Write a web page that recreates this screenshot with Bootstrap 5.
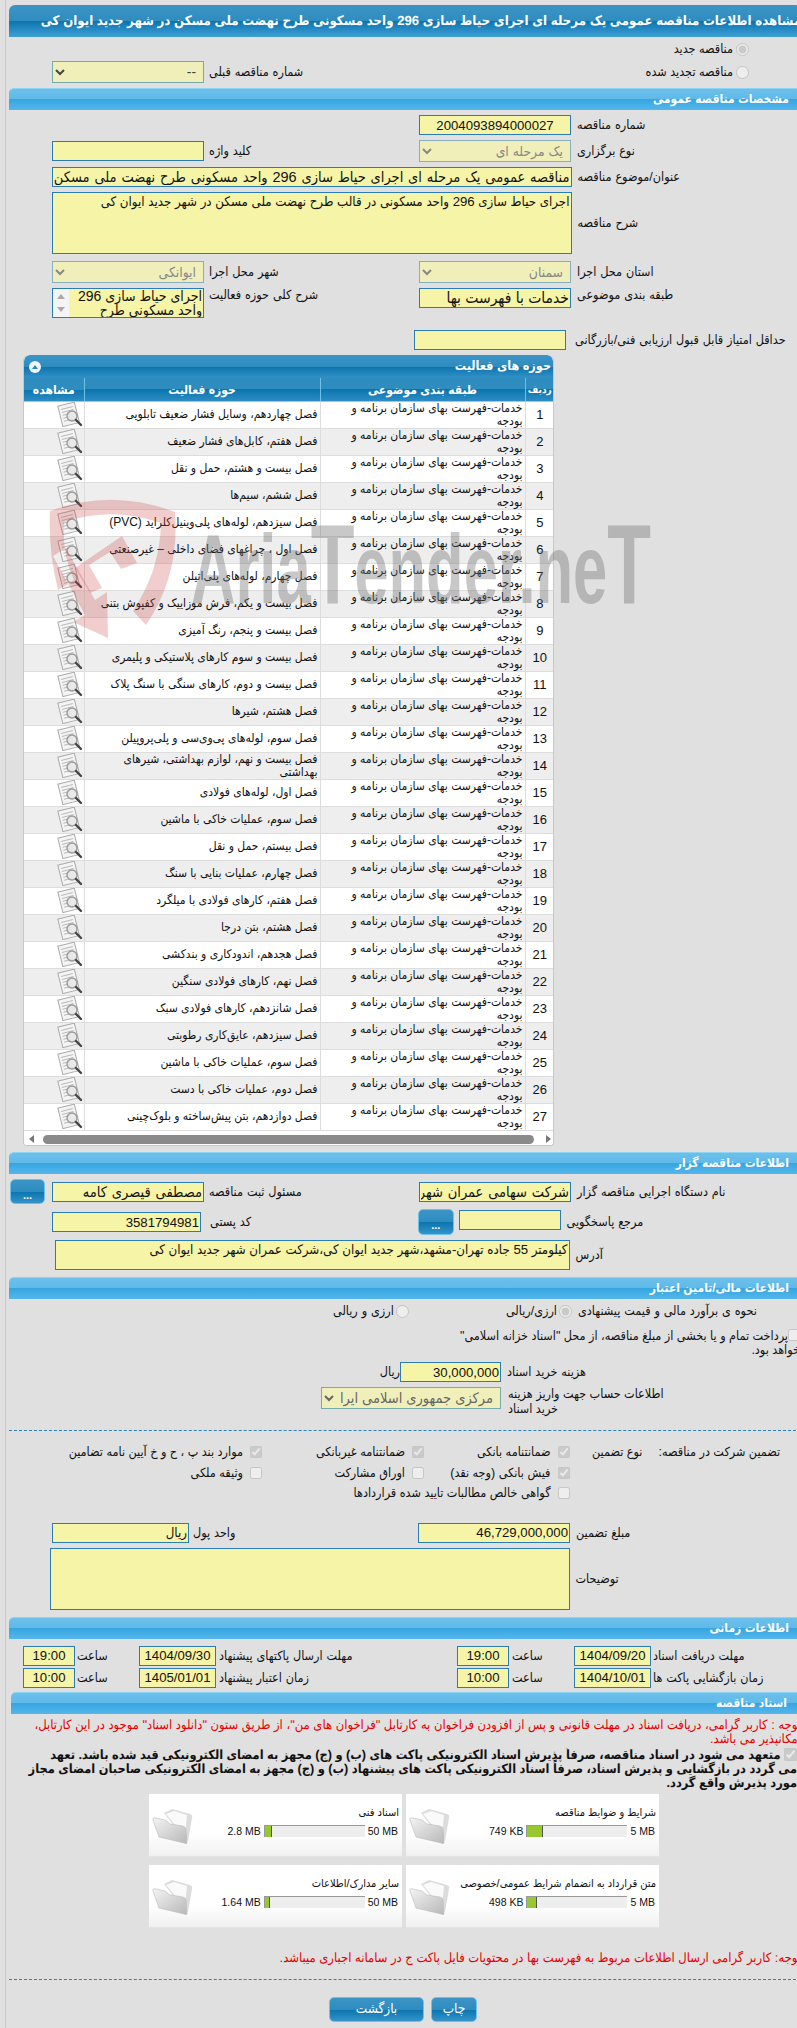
<!DOCTYPE html>
<html lang="fa">
<head>
<meta charset="utf-8">
<title>مشاهده اطلاعات مناقصه</title>
<link href="https://cdn.jsdelivr.net/npm/bootstrap@5.3.0/dist/css/bootstrap.min.css" rel="stylesheet">
<style>
html,body{margin:0;background:#e0e0e0;overflow:hidden}
body{width:797px;height:2028px;font-family:"Liberation Sans","DejaVu Sans Condensed","DejaVu Sans",sans-serif;font-size:12px;line-height:14px;color:#111}
.pagebox{position:relative;margin-left:5px;border-left:1px solid #c9c9c9;padding-left:3px;width:796px;height:2028px;overflow:hidden}
.hdr{height:32px;margin-top:5px;border-radius:6px 6px 0 0;background:linear-gradient(#3c94c6 0,#2f8cbf 50%,#0b74ad 50%,#3f9fd6 100%);color:#fff;font-weight:700;font-size:13.15px;text-rendering:geometricPrecision;line-height:32px;white-space:nowrap;text-align:right;overflow:hidden}
.sec{height:22px;border-radius:5px 5px 0 0;background:linear-gradient(#6cc0eb 0,#5fb9e9 50%,#36a6e1 50%,#55b6ea 100%);border-top:1px solid #8fd3f3;color:#fff;font-weight:700;font-size:12px;line-height:21px;padding-right:12px;text-align:right}
.sec5{margin-left:2px;padding-right:14px}
.m2{margin-top:2px}.m4{margin-top:4px}.m5{margin-top:5px}.m6{margin-top:6px}.m7{margin-top:7px}.m8{margin-top:8px}.m12{margin-top:12px}.m19{margin-top:19px}
.pl43{padding-left:43px}
.h20{height:20px}.h22{height:22px}.h25{height:25px}.h26{height:26px}.h30{height:30px}
.fld{width:152px;flex:none}
.lbl1{width:215px;flex:none;padding-left:5px}
.lbl2{padding-left:6px;flex:none}
.tl{text-align:left;font-size:12.5px;white-space:nowrap;word-spacing:.4px}
.fc.form-control,.fsel{display:block;height:20px;min-height:0;padding:0 1px;border:1px solid #2b7cb3;border-radius:0;background:#f6f4a6;color:#111;font-family:inherit;font-size:13.2px;line-height:18px;box-shadow:none;text-align:right}
.fc.form-control.big{font-size:14.5px;word-spacing:.8px}
.fc.form-control.big2{font-size:15.5px}
.fsel{height:22px;border-color:#88aebf;background:#f0efb9;color:#888;width:100%;padding:0 3px;font-size:13.8px}
.fsel.live{color:#444;border-color:#7aa}
.fsel.wide{font-size:14.5px;color:#666}
textarea.fc.form-control{resize:none;overflow:hidden;line-height:16px;height:62px;padding:1px}
.rdo{width:13px;height:13px;margin:0;flex:none}
.radio-line{padding-right:52px;height:14px;justify-content:flex-end;gap:3px;align-items:center}
.radio-line span,.rside span{font-size:12.5px}
.rside{padding-right:52px;gap:3px;margin-left:auto;align-items:center}
.lst{height:30px;border:1px solid #2b7cb3;background:#f6f4a6;overflow:hidden}
.lsb{width:16px;flex:none;background:#f4f4f4;display:flex;flex-direction:column;justify-content:space-between;align-items:center;padding:5px 0}
.lsb i{display:block;border:4px solid transparent}
.lsb i.u{border-bottom:5px solid #aaa;border-top:0}
.lsb i.d{border-top:5px solid #aaa;border-bottom:0}
.ltx{flex:1;font-size:14px;line-height:14px;text-align:right;overflow:hidden;padding-right:1px}
.panel{margin-left:14px;width:531px;background:#fff;border:1px solid #a9cfe9;border-top:0;border-radius:6px 6px 4px 4px;height:791px;overflow:hidden}
.pbar{height:23px;background:linear-gradient(#3c94c6 0,#2f8cbf 50%,#0b74ad 50%,#3390c8 100%);color:#fff;font-weight:700;font-size:12.5px;line-height:23px;padding:0 2px 0 5px;border-radius:6px 6px 0 0}
.tog{width:12px;height:12px;border-radius:50%;background:#eef6fb;display:flex;align-items:center;justify-content:center}
.tog::before{content:"";border:3.5px solid transparent;border-bottom:4px solid #2f86b8;border-top:0}
.grid.table{table-layout:fixed;width:530px;margin:0;border-collapse:collapse;background:#fff}
.grid.table th{height:23px;padding:0;background:linear-gradient(#2f8cbf 0,#2f8cbf 50%,#0b74ad 50%,#2d8cc4 100%);color:#fff;font-weight:700;font-size:12px;text-align:center;border:0;border-left:1px solid #6ec0e8;border-bottom:1px solid #86d2f4;line-height:22px;box-shadow:none;white-space:nowrap}
.grid.table th:first-child{border-left:0}
.grid.table th.thn{font-size:10px}
.grid.table td{height:27px;padding:0 2px;border:0;border-left:1px solid #ddd;border-bottom:1px solid #ddd;line-height:13px;font-size:12px;color:#111;text-align:right;background:#fff;box-shadow:none;overflow:hidden;vertical-align:middle}
.grid.table td:first-child{border-left:0;padding:0}
.grid.table td.num{text-align:center;font-size:13px}
.grid.table tbody tr:nth-child(even) td{background:#eee}
.docic{display:block;width:26px;height:25px;margin:0 0 0 33px}
.cw1{width:60px}.cw2{width:236px}.cw3{width:205px}.cw4{width:29px}
.sbar{height:16px;padding:4px 2px 0 5px;gap:5px;align-items:flex-start;background:#fff}
.sbar i{display:block;border:4.5px solid transparent}
.sbar i.l{border-right:5px solid #777;border-left:0}
.sbar i.r{border-left:5px solid #777;border-right:0}
.sbar b{display:block;flex:1;height:9px;border-radius:5px;background:#8a8a8a;margin:0 7px 0 4px}
.bluebtn.btn{padding:0;border:1px solid #6ec1e8;border-radius:5px;background:linear-gradient(#3c94c6 0,#2f8cbf 50%,#0b74ad 50%,#3593ca 100%);color:#fff;font-family:inherit;font-size:13.5px;line-height:20px}
.bluebtn.dots{width:35px;height:25px;font-weight:700;font-size:11px;line-height:30px}
.bluebtn.dots2{width:36.5px;height:26px}
.pl1{padding-left:1px}
.gap7{margin-right:7px}
.w149{width:149px;flex:none}
.lblz{width:216.5px;flex:none;padding-left:9px}
.w101{width:101.5px;flex:none;margin-left:5px;margin-top:-4px}
.addr{padding-left:46px;height:30px}
.addr textarea.fc.form-control{height:30px;width:514.5px}
.addrl{padding-top:8px}
.cen{align-items:center}
.opts{padding-left:324px;height:14px;align-items:center}
.opt{gap:2px;align-items:center;flex:none}
.opt1{width:169px;justify-content:flex-end;margin-left:-6px}
.opt2{width:76px}
.treasury{margin-left:421px;margin-top:11px;width:370px;height:28px;line-height:14px;white-space:nowrap;font-size:12.5px;text-align:right}
.treasury input{width:12px;height:12px;margin:0;vertical-align:-1px}
.cost{padding-left:371px;height:20px;align-items:center}
.cost .unit{width:20px;flex:none;font-size:12.5px}
.fld2{width:101px;flex:none}
.fld3{width:180px;height:22px;flex:none}
.acct{padding-left:312px;height:27px;margin-top:5px;align-items:flex-start}
.acct .t{width:170px;padding-left:7px;text-align:left;line-height:15px;font-size:12.5px}
.dash{height:0;border-top:1px dashed #2b83bb}
.dash1{margin-top:16px}
.dash2{margin-top:14px}
.gr{display:flex;height:20.5px;align-items:center}
.c3{width:253px}.c2{width:162px}.c1{width:145.5px}
.gc{display:flex;justify-content:flex-end;align-items:center;gap:7px;font-size:12.5px;white-space:nowrap;flex:none}
.gw{width:307.5px}
.cb{width:12px;height:12px;margin:0;flex:none}
.guar{margin-top:11px}
.gl1{width:53px;margin-left:20px;font-size:12.5px;white-space:nowrap}
.gl2{margin-left:16px;font-size:12.5px;white-space:nowrap}
.w137{width:137px;flex:none}
.lblp{width:229px;flex:none;padding-left:4px}
.ta2{padding-left:41px;height:62px}
.ta2 textarea.fc.form-control{width:519.5px;height:62px}
.fw519{width:519.5px;flex:none}
.pl14{padding-left:14px}
.fc.form-control.tm,.fc.form-control.dt{text-align:center;padding:0;flex:none}
.fc.form-control.tm{width:52px}
.fc.form-control.dt{width:77px}
.ls{width:64px;flex:none;padding-left:2px}
.ld{width:241px;flex:none;padding-left:3px}
.ls2{width:65px;flex:none;padding-left:3px}
.ld2{flex:none;padding-left:2px}
.redtxt{color:#e60000;font-size:12.9px;text-rendering:geometricPrecision;line-height:14px;white-space:nowrap;text-align:right;overflow:hidden}
.noticeb{font-weight:700;font-size:12.7px;text-rendering:geometricPrecision;line-height:14px;white-space:nowrap;text-align:right;margin-top:2px;height:42px;padding-right:4px;color:#111;overflow:hidden}
.noticeb input{width:13px;height:13px;margin:0;vertical-align:-2px}
.files{margin-left:140px;width:510px;margin-top:4px;display:grid;grid-template-columns:253px 253px;column-gap:4px;row-gap:8px}
.fbox{height:63px;display:flex;background:linear-gradient(#fff 0,#fff 65%,#f0f0f0 100%);border-bottom:1px solid #e4e4e4}
.folder{width:41px;height:36px;flex:none;margin:14px 0 0 3px}
.fin{flex:1;min-width:0;padding:0 4px 0 5px}
.ftitle{text-align:right;font-size:11px;line-height:14px;margin-top:11px;white-space:nowrap;height:14px;margin-right:-1px}
.fmeter{margin-top:6px;height:12px;display:flex;align-items:center;font-size:10.5px;justify-content:flex-end;gap:3px;white-space:nowrap}
.mbar{display:block;width:101px;height:12px;background:#eee;border-top:1px solid #999;border-left:1px solid #999;flex:none}
.mbar span{display:block;height:11px;background:#97c92f;border-right:1px solid #555}
.mv1{width:16%}.mv2{width:10%}.mv3{width:5%}.mv4{width:7.5%}
.note2{margin-top:23px}
.btns{margin-top:17px;padding-left:320px;gap:7px}
.bluebtn.bk{width:95px;height:25px}.bluebtn.pr{width:46px;height:25px}
.wm{position:absolute;left:0;top:0;pointer-events:none;width:796px;height:800px}
.minrow{padding-left:405px}
.minl{padding-left:9px}
</style>
</head>
<body>
<div class="pagebox">

<div class="hdr" dir="rtl">مشاهده اطلاعات مناقصه عمومی یک مرحله ای اجرای حیاط سازی 296 واحد مسکونی طرح نهضت ملی مسکن در شهر جدید ایوان کی</div>

<div class="d-flex radio-line m5"><span dir="rtl">مناقصه جدید</span><input class="rdo" type="radio" name="a" checked disabled></div>

<div class="d-flex pl43 m5 h22 cen">
  <div class="fld"><select class="fsel live" dir="rtl" disabled><option>--</option></select></div>
  <div class="lbl1 tl" dir="rtl">شماره مناقصه قبلی</div>
  <div class="d-flex rside"><span dir="rtl">مناقصه تجدید شده</span><input class="rdo" type="radio" name="a" disabled></div>
</div>

<div class="sec m5" dir="rtl">مشخصات مناقصه عمومی</div>

<div class="d-flex pl43 m5 h20 cen">
  <div class="fld"></div><div class="lbl1"></div>
  <div class="fld"><input class="form-control fc text-center" value="2004093894000027" readonly></div>
  <div class="lbl2 tl" dir="rtl">شماره مناقصه</div>
</div>
<div class="d-flex pl43 m5 h22 cen">
  <div class="fld"><input class="form-control fc" readonly></div>
  <div class="lbl1 tl" dir="rtl">کلید واژه</div>
  <div class="fld"><select class="fsel" dir="rtl" disabled><option>یک مرحله ای</option></select></div>
  <div class="lbl2 tl" dir="rtl">نوع برگزاری</div>
</div>
<div class="d-flex pl43 m5 h20 cen">
  <div class="fw519"><input class="form-control fc big" dir="rtl" value="مناقصه عمومی یک مرحله ای اجرای حیاط سازی 296 واحد مسکونی طرح نهضت ملی مسکن در شهر جدید ایوان کی" readonly></div>
  <div class="lbl2 tl" dir="rtl">عنوان/موضوع مناقصه</div>
</div>
<div class="d-flex pl43 m5 cen">
  <div class="fw519"><textarea class="form-control fc" dir="rtl" readonly>اجرای حیاط سازی 296 واحد مسکونی در قالب طرح نهضت ملی مسکن در شهر جدید ایوان کی</textarea></div>
  <div class="lbl2 tl" dir="rtl">شرح مناقصه</div>
</div>
<div class="d-flex pl43 m7 h22 cen">
  <div class="fld"><select class="fsel" dir="rtl" disabled><option>ایوانکی</option></select></div>
  <div class="lbl1 tl" dir="rtl">شهر محل اجرا</div>
  <div class="fld"><select class="fsel" dir="rtl" disabled><option>سمنان</option></select></div>
  <div class="lbl2 tl" dir="rtl">استان محل اجرا</div>
</div>
<div class="d-flex pl43 m5 h30">
  <div class="fld lst d-flex"><div class="lsb"><i class="u"></i><i class="d"></i></div><div class="ltx" dir="rtl">اجرای حیاط سازی 296 واحد مسکونی طرح نهضت</div></div>
  <div class="lbl1 tl" dir="rtl">شرح کلی حوزه فعالیت</div>
  <div class="fld"><input class="form-control fc big2" dir="rtl" value="خدمات با فهرست بها" readonly></div>
  <div class="lbl2 tl" dir="rtl">طبقه بندی موضوعی</div>
</div>
<div class="d-flex m12 h20 cen minrow">
  <div class="fld"><input class="form-control fc" readonly></div>
  <div class="lbl2 tl minl" dir="rtl">حداقل امتیاز قابل قبول ارزیابی فنی/بازرگانی</div>
</div>

<div class="panel m5">
  <div class="pbar d-flex justify-content-between align-items-center"><span class="tog"></span><span dir="rtl">حوزه های فعالیت</span></div>
  <table class="table grid">
    <colgroup><col class="cw1"><col class="cw2"><col class="cw3"><col class="cw4"></colgroup>
    <thead><tr><th dir="rtl">مشاهده</th><th dir="rtl">حوزه فعالیت</th><th dir="rtl">طبقه بندی موضوعی</th><th dir="rtl" class="thn">ردیف</th></tr></thead>
    <tbody>
    <tr><td><svg class="docic"><use href="#doc"/></svg></td><td dir="rtl">فصل چهاردهم، وسایل فشار ضعیف تابلویی</td><td dir="rtl">خدمات-فهرست بهای سازمان برنامه و بودجه</td><td class="num">1</td></tr>
    <tr><td><svg class="docic"><use href="#doc"/></svg></td><td dir="rtl">فصل هفتم، کابل‌های فشار ضعیف</td><td dir="rtl">خدمات-فهرست بهای سازمان برنامه و بودجه</td><td class="num">2</td></tr>
    <tr><td><svg class="docic"><use href="#doc"/></svg></td><td dir="rtl">فصل بیست و هشتم، حمل و نقل</td><td dir="rtl">خدمات-فهرست بهای سازمان برنامه و بودجه</td><td class="num">3</td></tr>
    <tr><td><svg class="docic"><use href="#doc"/></svg></td><td dir="rtl">فصل ششم، سیم‌ها</td><td dir="rtl">خدمات-فهرست بهای سازمان برنامه و بودجه</td><td class="num">4</td></tr>
    <tr><td><svg class="docic"><use href="#doc"/></svg></td><td dir="rtl">فصل سیزدهم، لوله‌های پلی‌وینیل‌کلراید (PVC)</td><td dir="rtl">خدمات-فهرست بهای سازمان برنامه و بودجه</td><td class="num">5</td></tr>
    <tr><td><svg class="docic"><use href="#doc"/></svg></td><td dir="rtl">فصل اول ، چراغهای فضای داخلی – غیرصنعتی</td><td dir="rtl">خدمات-فهرست بهای سازمان برنامه و بودجه</td><td class="num">6</td></tr>
    <tr><td><svg class="docic"><use href="#doc"/></svg></td><td dir="rtl">فصل چهارم، لوله‌های پلی‌اتیلن</td><td dir="rtl">خدمات-فهرست بهای سازمان برنامه و بودجه</td><td class="num">7</td></tr>
    <tr><td><svg class="docic"><use href="#doc"/></svg></td><td dir="rtl">فصل بیست و یکم، فرش موزاییک و کفپوش بتنی</td><td dir="rtl">خدمات-فهرست بهای سازمان برنامه و بودجه</td><td class="num">8</td></tr>
    <tr><td><svg class="docic"><use href="#doc"/></svg></td><td dir="rtl">فصل بیست و پنجم، رنگ آمیزی</td><td dir="rtl">خدمات-فهرست بهای سازمان برنامه و بودجه</td><td class="num">9</td></tr>
    <tr><td><svg class="docic"><use href="#doc"/></svg></td><td dir="rtl">فصل بیست و سوم کارهای پلاستیکی و پلیمری</td><td dir="rtl">خدمات-فهرست بهای سازمان برنامه و بودجه</td><td class="num">10</td></tr>
    <tr><td><svg class="docic"><use href="#doc"/></svg></td><td dir="rtl">فصل بیست و دوم، کارهای سنگی با سنگ پلاک</td><td dir="rtl">خدمات-فهرست بهای سازمان برنامه و بودجه</td><td class="num">11</td></tr>
    <tr><td><svg class="docic"><use href="#doc"/></svg></td><td dir="rtl">فصل هشتم، شیرها</td><td dir="rtl">خدمات-فهرست بهای سازمان برنامه و بودجه</td><td class="num">12</td></tr>
    <tr><td><svg class="docic"><use href="#doc"/></svg></td><td dir="rtl">فصل سوم، لوله‌های پی‌وی‌سی و پلی‌پروپیلن</td><td dir="rtl">خدمات-فهرست بهای سازمان برنامه و بودجه</td><td class="num">13</td></tr>
    <tr><td><svg class="docic"><use href="#doc"/></svg></td><td dir="rtl">فصل بیست و نهم، لوازم بهداشتی، شیرهای بهداشتی</td><td dir="rtl">خدمات-فهرست بهای سازمان برنامه و بودجه</td><td class="num">14</td></tr>
    <tr><td><svg class="docic"><use href="#doc"/></svg></td><td dir="rtl">فصل اول، لوله‌های فولادی</td><td dir="rtl">خدمات-فهرست بهای سازمان برنامه و بودجه</td><td class="num">15</td></tr>
    <tr><td><svg class="docic"><use href="#doc"/></svg></td><td dir="rtl">فصل سوم، عملیات خاکی با ماشین</td><td dir="rtl">خدمات-فهرست بهای سازمان برنامه و بودجه</td><td class="num">16</td></tr>
    <tr><td><svg class="docic"><use href="#doc"/></svg></td><td dir="rtl">فصل بیستم، حمل و نقل</td><td dir="rtl">خدمات-فهرست بهای سازمان برنامه و بودجه</td><td class="num">17</td></tr>
    <tr><td><svg class="docic"><use href="#doc"/></svg></td><td dir="rtl">فصل چهارم، عملیات بنایی با سنگ</td><td dir="rtl">خدمات-فهرست بهای سازمان برنامه و بودجه</td><td class="num">18</td></tr>
    <tr><td><svg class="docic"><use href="#doc"/></svg></td><td dir="rtl">فصل هفتم، کارهای فولادی با میلگرد</td><td dir="rtl">خدمات-فهرست بهای سازمان برنامه و بودجه</td><td class="num">19</td></tr>
    <tr><td><svg class="docic"><use href="#doc"/></svg></td><td dir="rtl">فصل هشتم، بتن درجا</td><td dir="rtl">خدمات-فهرست بهای سازمان برنامه و بودجه</td><td class="num">20</td></tr>
    <tr><td><svg class="docic"><use href="#doc"/></svg></td><td dir="rtl">فصل هجدهم، اندودکاری و بندکشی</td><td dir="rtl">خدمات-فهرست بهای سازمان برنامه و بودجه</td><td class="num">21</td></tr>
    <tr><td><svg class="docic"><use href="#doc"/></svg></td><td dir="rtl">فصل نهم، کارهای فولادی سنگین</td><td dir="rtl">خدمات-فهرست بهای سازمان برنامه و بودجه</td><td class="num">22</td></tr>
    <tr><td><svg class="docic"><use href="#doc"/></svg></td><td dir="rtl">فصل شانزدهم، کارهای فولادی سبک</td><td dir="rtl">خدمات-فهرست بهای سازمان برنامه و بودجه</td><td class="num">23</td></tr>
    <tr><td><svg class="docic"><use href="#doc"/></svg></td><td dir="rtl">فصل سیزدهم، عایق‌کاری رطوبتی</td><td dir="rtl">خدمات-فهرست بهای سازمان برنامه و بودجه</td><td class="num">24</td></tr>
    <tr><td><svg class="docic"><use href="#doc"/></svg></td><td dir="rtl">فصل سوم، عملیات خاکی با ماشین</td><td dir="rtl">خدمات-فهرست بهای سازمان برنامه و بودجه</td><td class="num">25</td></tr>
    <tr><td><svg class="docic"><use href="#doc"/></svg></td><td dir="rtl">فصل دوم، عملیات خاکی با دست</td><td dir="rtl">خدمات-فهرست بهای سازمان برنامه و بودجه</td><td class="num">26</td></tr>
    <tr><td><svg class="docic"><use href="#doc"/></svg></td><td dir="rtl">فصل دوازدهم، بتن پیش‌ساخته و بلوک‌چینی</td><td dir="rtl">خدمات-فهرست بهای سازمان برنامه و بودجه</td><td class="num">27</td></tr>
    </tbody>
  </table>
  <div class="sbar d-flex"><i class="l"></i><b></b><i class="r"></i></div>
</div>

<div class="sec m6" dir="rtl">اطلاعات مناقصه گزار</div>

<div class="d-flex pl1 m5 h25 cen">
  <button class="btn bluebtn dots gap7" type="button">...</button>
  <div class="fld"><input class="form-control fc big" dir="rtl" value="مصطفی قیصری کامه" readonly></div>
  <div class="lbl1 tl" dir="rtl">مسئول ثبت مناقصه</div>
  <div class="fld"><input class="form-control fc big" dir="rtl" value="شرکت سهامی عمران شهر جدید ایوان کی" readonly></div>
  <div class="lbl2 tl" dir="rtl">نام دستگاه اجرایی مناقصه گزار</div>
</div>
<div class="d-flex pl43 m5 h26 cen">
  <div class="w149"><input class="form-control fc" value="3581794981" readonly dir="rtl"></div>
  <div class="lblz tl" dir="rtl">کد پستی</div>
  <button class="btn bluebtn dots dots2" type="button">...</button>
  <div class="w101"><input class="form-control fc" readonly></div>
  <div class="lbl2 tl" dir="rtl">مرجع پاسخگویی</div>
</div>
<div class="d-flex addr m5">
  <textarea class="form-control fc" dir="rtl" readonly>کیلومتر 55 جاده تهران-مشهد،شهر جدید ایوان کی،شرکت عمران شهر جدید ایوان کی</textarea>
  <div class="lbl2 tl addrl" dir="rtl">آدرس</div>
</div>

<div class="sec m7" dir="rtl">اطلاعات مالی/تامین اعتبار</div>

<div class="d-flex opts m5">
  <div class="d-flex opt opt2"><span dir="rtl" class="tl">ارزی و ریالی</span><input class="rdo" type="radio" name="b" disabled></div>
  <div class="d-flex opt opt1"><span dir="rtl" class="tl">ارزی/ریالی</span><input class="rdo" type="radio" name="b" checked disabled></div>
  <div class="lbl2 tl" dir="rtl">نحوه ی برآورد مالی و قیمت پیشنهادی</div>
</div>
<div class="treasury" dir="rtl"><input type="checkbox" disabled>پرداخت تمام و یا بخشی از مبلغ مناقصه، از محل "اسناد خزانه اسلامی"<br>خواهد بود.</div>

<div class="d-flex cost m5">
  <div class="unit" dir="rtl">ریال</div>
  <div class="fld2"><input class="form-control fc" dir="rtl" value="30,000,000" readonly></div>
  <div class="lbl2 tl" dir="rtl">هزینه خرید اسناد</div>
</div>
<div class="d-flex acct">
  <div class="fld3"><select class="fsel live wide" dir="rtl" disabled><option>مرکزی جمهوری اسلامی ایران</option></select></div>
  <div class="t" dir="rtl">اطلاعات حساب جهت واریز هزینه خرید اسناد</div>
</div>
<div class="dash dash1"></div>

<div class="guar">
  <div class="gr">
    <div class="gc c3"><span dir="rtl">موارد بند پ ، ح و خ آیین نامه تضامین</span><input class="cb" type="checkbox" checked disabled></div>
    <div class="gc c2"><span dir="rtl">ضمانتنامه غیربانکی</span><input class="cb" type="checkbox" checked disabled></div>
    <div class="gc c1"><span dir="rtl">ضمانتنامه بانکی</span><input class="cb" type="checkbox" checked disabled></div>
    <div class="gl1" dir="rtl">نوع تضمین</div>
    <div class="gl2" dir="rtl">تضمین شرکت در مناقصه:</div>
  </div>
  <div class="gr">
    <div class="gc c3"><span dir="rtl">وثیقه ملکی</span><input class="cb" type="checkbox" disabled></div>
    <div class="gc c2"><span dir="rtl">اوراق مشارکت</span><input class="cb" type="checkbox" disabled></div>
    <div class="gc c1"><span dir="rtl">فیش بانکی (وجه نقد)</span><input class="cb" type="checkbox" checked disabled></div>
  </div>
  <div class="gr">
    <div class="c3"></div>
    <div class="gc gw"><span dir="rtl">گواهی خالص مطالبات تایید شده قراردادها</span><input class="cb" type="checkbox" disabled></div>
  </div>
</div>

<div class="d-flex pl43 m19 h20 cen">
  <div class="w137"><input class="form-control fc" dir="rtl" value="ریال" readonly></div>
  <div class="lblp tl" dir="rtl">واحد پول</div>
  <div class="fld"><input class="form-control fc" dir="rtl" value="46,729,000,000" readonly></div>
  <div class="lbl2 tl" dir="rtl">مبلغ تضمین</div>
</div>
<div class="d-flex ta2 m5 cen">
  <textarea class="form-control fc" dir="rtl" readonly></textarea>
  <div class="lbl2 tl" dir="rtl">توضیحات</div>
</div>

<div class="sec m7" dir="rtl">اطلاعات زمانی</div>

<div class="d-flex pl14 m7 h20 cen">
  <input class="form-control fc tm" value="19:00" readonly>
  <div class="ls tl" dir="rtl">ساعت</div>
  <input class="form-control fc dt" value="1404/09/30" readonly>
  <div class="ld tl" dir="rtl">مهلت ارسال پاکتهای پیشنهاد</div>
  <input class="form-control fc tm" value="19:00" readonly>
  <div class="ls2 tl" dir="rtl">ساعت</div>
  <input class="form-control fc dt" value="1404/09/20" readonly>
  <div class="ld2 tl" dir="rtl">مهلت دریافت اسناد</div>
</div>
<div class="d-flex pl14 m2 h20 cen">
  <input class="form-control fc tm" value="10:00" readonly>
  <div class="ls tl" dir="rtl">ساعت</div>
  <input class="form-control fc dt" value="1405/01/01" readonly>
  <div class="ld tl" dir="rtl">زمان اعتبار پیشنهاد</div>
  <input class="form-control fc tm" value="10:00" readonly>
  <div class="ls2 tl" dir="rtl">ساعت</div>
  <input class="form-control fc dt" value="1404/10/01" readonly>
  <div class="ld2 tl" dir="rtl">زمان بازگشایی پاکت ها</div>
</div>

<div class="sec sec5 m4" dir="rtl">اسناد مناقصه</div>

<div class="redtxt m4" dir="rtl">توجه : کاربر گرامی، دریافت اسناد در مهلت قانونی و پس از افزودن فراخوان به کارتابل "فراخوان های من"، از طریق ستون "دانلود اسناد" موجود در این کارتابل،<br>امکانپذیر می باشد.</div>
<div class="noticeb" dir="rtl"><input type="checkbox" checked disabled> متعهد می شود در اسناد مناقصه، صرفاً پذیرش اسناد الکترونیکی پاکت های (ب) و (ج) مجهز به امضای الکترونیکی قید شده باشد. تعهد<br>می گردد در بازگشایی و پذیرش اسناد، صرفاً اسناد الکترونیکی پاکت های پیشنهاد (ب) و (ج) مجهز به امضای الکترونیکی صاحبان امضای مجاز<br>مورد پذیرش واقع گردد.</div>

<div class="files">
  <div class="fbox"><svg class="folder"><use href="#fold"/></svg><div class="fin"><div class="ftitle" dir="rtl">اسناد فنی</div><div class="fmeter"><span>2.8 MB</span><span class="mbar"><span class="mv4"></span></span><span>50 MB</span></div></div></div>
  <div class="fbox"><svg class="folder"><use href="#fold"/></svg><div class="fin"><div class="ftitle" dir="rtl">شرایط و ضوابط مناقصه</div><div class="fmeter"><span>749 KB</span><span class="mbar"><span class="mv1"></span></span><span>5 MB</span></div></div></div>
  <div class="fbox"><svg class="folder"><use href="#fold"/></svg><div class="fin"><div class="ftitle" dir="rtl">سایر مدارک/اطلاعات</div><div class="fmeter"><span>1.64 MB</span><span class="mbar"><span class="mv3"></span></span><span>50 MB</span></div></div></div>
  <div class="fbox"><svg class="folder"><use href="#fold"/></svg><div class="fin"><div class="ftitle" dir="rtl">متن قرارداد به انضمام شرایط عمومی/خصوصی</div><div class="fmeter"><span>498 KB</span><span class="mbar"><span class="mv2"></span></span><span>5 MB</span></div></div></div>
</div>

<div class="redtxt note2" dir="rtl">توجه: کاربر گرامی ارسال اطلاعات مربوط به فهرست بها در محتویات فایل پاکت ج در سامانه اجباری میباشد.</div>

<div class="dash dash2"></div>

<div class="d-flex btns">
  <button class="btn bluebtn bk" type="button">بازگشت</button>
  <button class="btn bluebtn pr" type="button">چاپ</button>
</div>

<svg class="wm" viewBox="0 0 796 800">
  <g transform="translate(-6 0)">
    <path fill="rgba(205,70,70,.27)" fill-rule="evenodd" d="M50 511Q112 488 175 512Q180 575 146 625L133 611Q160 570 161 523Q112 506 64 522Q62 555 74 580L58 590Q48 550 50 511ZM53 556L66 548L95 600L107 592L108 638L73 622L85 615Z"/>
    <path fill="rgba(205,70,70,.27)" d="M75 568L122 536L137 563L121 569L110 552L89 565L102 588L90 593Z"/>
    <text x="191" y="603" font-family="Liberation Sans,sans-serif" font-weight="700" font-size="98" textLength="460" lengthAdjust="spacingAndGlyphs" fill="rgba(110,110,110,.38)">Aria<tspan font-size="114">T</tspan>ender.ne<tspan font-size="114">T</tspan></text>
  </g>
</svg>

</div>

<svg width="0" height="0" class="position-absolute">
  <defs>
    <symbol id="doc" viewBox="0 0 26 25">
      <g transform="rotate(-14 11 12)">
        <rect x="3" y="2" width="17" height="21" fill="#f4f4f4" stroke="#aaa" stroke-width="1"/>
        <path d="M5.5 6h12M5.5 9h12M5.5 12h8M5.5 15h7M5.5 18h9" stroke="#bbb" stroke-width="1"/>
      </g>
      <circle cx="15" cy="14" r="5" fill="#e6e6e6" fill-opacity=".8" stroke="#999" stroke-width="1.4"/>
      <path d="M19 18l5 5" stroke="#444" stroke-width="2.4" stroke-linecap="round"/>
    </symbol>
    <linearGradient id="fg" x1="0" y1="0" x2="1" y2="1"><stop offset="0" stop-color="#f4f4f4"/><stop offset="1" stop-color="#b8b8b8"/></linearGradient>
    <symbol id="fold" viewBox="0 0 41 36">
      <path d="M12 5l8-4 18 5q3 1 2 4l-4 23-4-2z" fill="#dcdcdc"/>
      <path d="M14 6l8-3 13 4-2 22z" fill="#fafafa"/>
      <path d="M1 12q-1-3 3-2l9 2 5 4 13 2q3 1 3 3l1 14q0 1-3 0L7 29z" fill="url(#fg)" stroke="#bbb" stroke-width=".6"/>
    </symbol>
  </defs>
</svg>
</body>
</html>
